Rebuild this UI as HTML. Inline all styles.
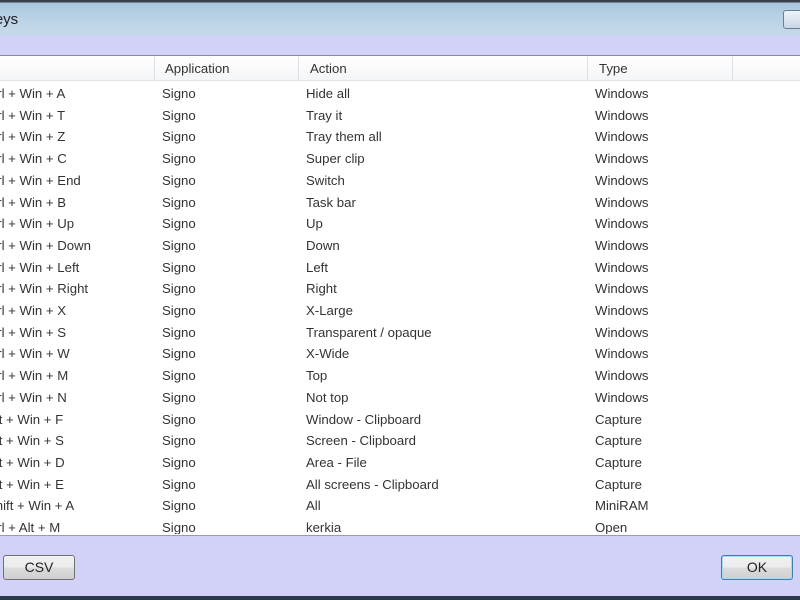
<!DOCTYPE html>
<html><head><style>
body{margin:0;width:800px;height:600px;overflow:hidden;position:relative;background:#d2d2f8;font-family:"Liberation Sans",sans-serif;font-size:13.2px;color:#333}
#title{position:absolute;left:0;top:0;width:800px;height:36px;background:linear-gradient(#3a4050 0,#3a4050 2px,#a9c6df 3px,#bcd3e6 20px,#c6d9ec 36px)}
#title span{position:absolute;left:-36px;top:11px;font-size:15px;color:#222}
#cls{position:absolute;left:783px;top:10px;width:24px;height:17px;border:1px solid #6a7f96;border-radius:3px;background:linear-gradient(#eef3f8,#c9d6e4)}
#list{position:absolute;left:0;top:55px;width:800px;height:479px;background:#fff;border-top:1px solid #8a8aa0;border-bottom:1px solid #9a9ab0;overflow:hidden}
#hdr{position:absolute;left:0;top:0;width:800px;height:24px;background:linear-gradient(#fff,#f4f5f7);border-bottom:1px solid #e2e4e8}
.sep{position:absolute;top:0;width:1px;height:24px;background:#dde0e5}
.h{position:absolute;top:5px;color:#333}
.r{position:absolute;left:0;width:800px;height:21px}
.r span{position:absolute;top:0;white-space:nowrap}
.btn{position:absolute;top:555px;width:70px;height:23px;border:1px solid #707070;border-radius:3px;background:linear-gradient(#f2f2f2 0,#ebebeb 50%,#dcdcdc 51%,#cfcfcf);text-align:center;line-height:23px;font-size:14px;color:#222}
#bot{position:absolute;left:0;top:596px;width:800px;height:4px;background:#2a3a48}
</style></head><body>
<div id="title"><span>Hotkeys</span><div id="cls"></div></div>
<div id="list">
<div id="hdr">
<div class="sep" style="left:154px"></div><div class="sep" style="left:298px"></div><div class="sep" style="left:587px"></div><div class="sep" style="left:732px"></div>
<span class="h" style="left:165px">Application</span><span class="h" style="left:310px">Action</span><span class="h" style="left:599px">Type</span>
</div>
</div>
<div class="btn" style="left:3px">CSV</div>
<div class="btn" style="left:721px;border-color:#3c7fb1;box-shadow:inset 0 0 0 1px #a6d8f4">OK</div>
<div id="bot"></div>
<div style="position:absolute;left:0;top:1px">
<div class="r" style="top:85px"><span style="left:-16px">Ctrl + Win + A</span><span style="left:162px">Signo</span><span style="left:306px">Hide all</span><span style="left:595px">Windows</span></div>
<div class="r" style="top:106.7px"><span style="left:-16px">Ctrl + Win + T</span><span style="left:162px">Signo</span><span style="left:306px">Tray it</span><span style="left:595px">Windows</span></div>
<div class="r" style="top:128.4px"><span style="left:-16px">Ctrl + Win + Z</span><span style="left:162px">Signo</span><span style="left:306px">Tray them all</span><span style="left:595px">Windows</span></div>
<div class="r" style="top:150.1px"><span style="left:-16px">Ctrl + Win + C</span><span style="left:162px">Signo</span><span style="left:306px">Super clip</span><span style="left:595px">Windows</span></div>
<div class="r" style="top:171.8px"><span style="left:-16px">Ctrl + Win + End</span><span style="left:162px">Signo</span><span style="left:306px">Switch</span><span style="left:595px">Windows</span></div>
<div class="r" style="top:193.5px"><span style="left:-16px">Ctrl + Win + B</span><span style="left:162px">Signo</span><span style="left:306px">Task bar</span><span style="left:595px">Windows</span></div>
<div class="r" style="top:215.2px"><span style="left:-16px">Ctrl + Win + Up</span><span style="left:162px">Signo</span><span style="left:306px">Up</span><span style="left:595px">Windows</span></div>
<div class="r" style="top:236.9px"><span style="left:-16px">Ctrl + Win + Down</span><span style="left:162px">Signo</span><span style="left:306px">Down</span><span style="left:595px">Windows</span></div>
<div class="r" style="top:258.6px"><span style="left:-16px">Ctrl + Win + Left</span><span style="left:162px">Signo</span><span style="left:306px">Left</span><span style="left:595px">Windows</span></div>
<div class="r" style="top:280.3px"><span style="left:-16px">Ctrl + Win + Right</span><span style="left:162px">Signo</span><span style="left:306px">Right</span><span style="left:595px">Windows</span></div>
<div class="r" style="top:302px"><span style="left:-16px">Ctrl + Win + X</span><span style="left:162px">Signo</span><span style="left:306px">X-Large</span><span style="left:595px">Windows</span></div>
<div class="r" style="top:323.7px"><span style="left:-16px">Ctrl + Win + S</span><span style="left:162px">Signo</span><span style="left:306px">Transparent / opaque</span><span style="left:595px">Windows</span></div>
<div class="r" style="top:345.4px"><span style="left:-16px">Ctrl + Win + W</span><span style="left:162px">Signo</span><span style="left:306px">X-Wide</span><span style="left:595px">Windows</span></div>
<div class="r" style="top:367.1px"><span style="left:-16px">Ctrl + Win + M</span><span style="left:162px">Signo</span><span style="left:306px">Top</span><span style="left:595px">Windows</span></div>
<div class="r" style="top:388.8px"><span style="left:-16px">Ctrl + Win + N</span><span style="left:162px">Signo</span><span style="left:306px">Not top</span><span style="left:595px">Windows</span></div>
<div class="r" style="top:410.5px"><span style="left:-13px">Alt + Win + F</span><span style="left:162px">Signo</span><span style="left:306px">Window - Clipboard</span><span style="left:595px">Capture</span></div>
<div class="r" style="top:432.2px"><span style="left:-13px">Alt + Win + S</span><span style="left:162px">Signo</span><span style="left:306px">Screen - Clipboard</span><span style="left:595px">Capture</span></div>
<div class="r" style="top:453.9px"><span style="left:-13px">Alt + Win + D</span><span style="left:162px">Signo</span><span style="left:306px">Area - File</span><span style="left:595px">Capture</span></div>
<div class="r" style="top:475.6px"><span style="left:-13px">Alt + Win + E</span><span style="left:162px">Signo</span><span style="left:306px">All screens - Clipboard</span><span style="left:595px">Capture</span></div>
<div class="r" style="top:497.3px"><span style="left:-13px">Shift + Win + A</span><span style="left:162px">Signo</span><span style="left:306px">All</span><span style="left:595px">MiniRAM</span></div>
<div class="r" style="top:519px;height:14px;overflow:hidden"><span style="left:-16px">Ctrl + Alt + M</span><span style="left:162px">Signo</span><span style="left:306px">kerkia</span><span style="left:595px">Open</span></div>
</div>
</body></html>
